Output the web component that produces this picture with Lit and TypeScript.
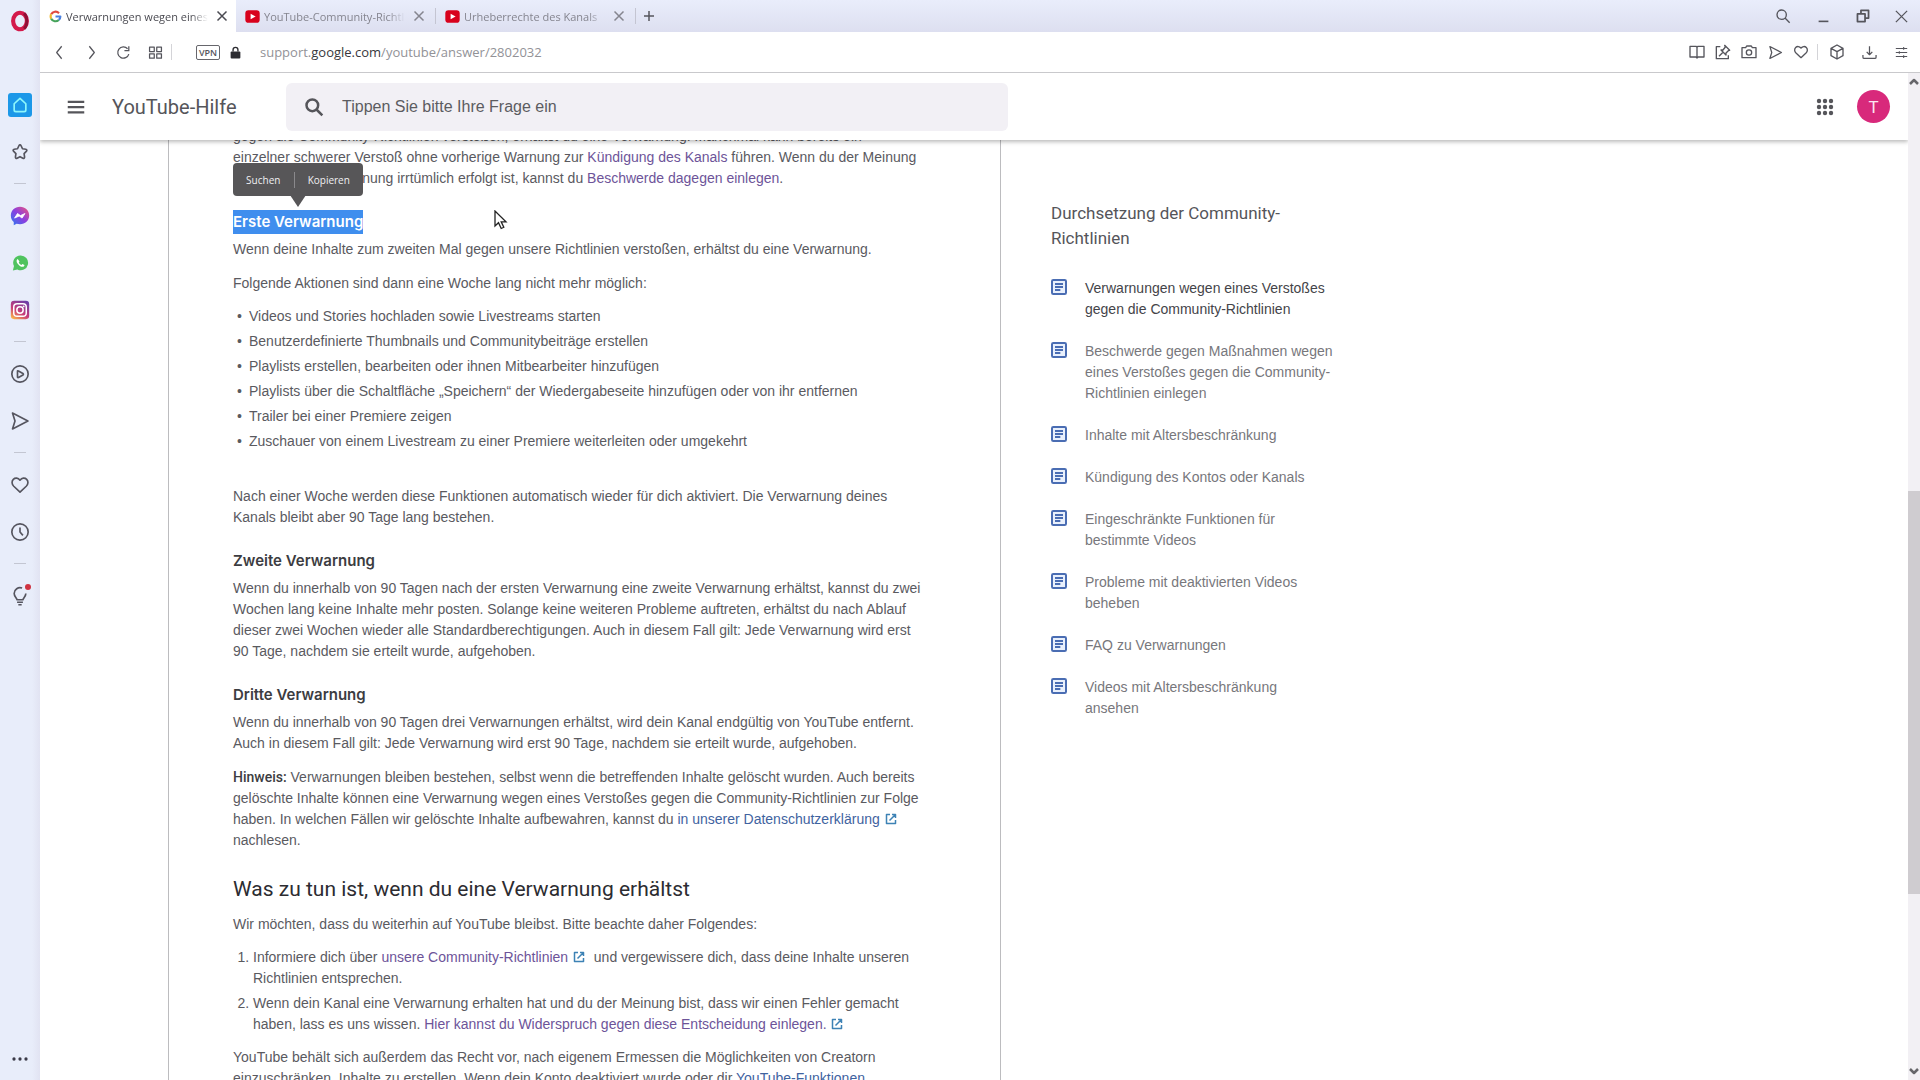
import { LitElement, html, css, svg, TemplateResult } from "lit";
import { customElement, property } from "lit/decorators.js";

const ICONS: Record<string, TemplateResult> = {
  opera: svg`<ellipse cx="12" cy="12" rx="7.500" ry="9" fill="none" stroke="#d3194a" stroke-width="4.500"/><path d="M16.500 3.500c4 4 4 13 0 17" fill="none" stroke="#8f0f35" stroke-width="3"/>`,
  home: svg`<path d="M5 10.500 12 4l7 6.500V18a2 2 0 0 1-2 2H7a2 2 0 0 1-2-2z"/>`,
  star: svg`<path d="M12 3.500c.6 0 1 .4 1.300 1l1.700 3.600 4 .6c1.200.2 1.600 1.500.8 2.300l-2.900 2.900.6 4.200c.1 1.200-1 1.900-2 1.400L12 17.600l-3.500 1.900c-1 .5-2.100-.2-2-1.400l.6-4.200L4.200 11c-.8-.8-.4-2.100.8-2.300l4-.6 1.700-3.600c.3-.6.700-1 1.300-1z"/>`,
  messenger: svg`<defs><linearGradient id="mg" x1="0" y1="1" x2="1" y2="0"><stop offset="0" stop-color="#2a7cf0"/><stop offset=".5" stop-color="#8a3fe0"/><stop offset="1" stop-color="#f0567a"/></linearGradient></defs><path d="M12 1C5.700 1 1 5.500 1 11.500c0 3.200 1.300 6 3.500 7.800V23l3.400-1.700c1.300.4 2.700.6 4.100.6 6.300 0 11-4.500 11-10.500S18.300 1 12 1z" fill="url(#mg)" stroke="none"/><path d="m5.500 14.500 3.500-5.500 3.500 2.500L18 9l-3.500 5.500-3.500-2.500z" fill="#fff" stroke="#fff" stroke-width="1"/>`,
  whatsapp: svg`<path d="M12.500 2A9.500 9.500 0 0 0 4 16l-1.500 6L8.500 20.500A9.800 9.800 0 1 0 12.500 2z" fill="#4fc35f" stroke="none"/><path d="M9 6.500c-2 1-2 3.500-.3 6.100 1.800 2.700 4.500 4.600 6.800 4.500 1.500 0 2.500-1.200 2.400-2.600l-2.700-1.300-1.300 1.400c-1.700-.6-3-2-3.600-3.400l1-1.300z" fill="#fff" stroke="none"/>`,
  instagram: svg`<defs><linearGradient id="ig" x1="0.200" y1="1" x2="0.800" y2="0"><stop offset="0" stop-color="#f9b04a"/><stop offset=".4" stop-color="#c93c78"/><stop offset="1" stop-color="#6a3fa8"/></linearGradient></defs><rect x="1" y="1" width="22" height="22" rx="4" fill="url(#ig)" stroke="none"/><rect x="4.500" y="4.500" width="15" height="15" rx="4" stroke="#fff" stroke-width="1.800"/><circle cx="12" cy="12" r="3.800" stroke="#fff" stroke-width="1.800"/><circle cx="16.400" cy="7.700" r="1.100" fill="#fff" stroke="none"/>`,
  play: svg`<circle cx="12" cy="12" r="9.800"/><path d="M9 8.500v7c0 .8.400 1 1.200.7l5.300-3c.8-.6.800-1.200 0-1.800l-5.300-3c-.8-.5-1.200-.3-1.200.1z"/>`,
  send: svg`<path d="M3 2.500 21.500 12 3 21.500 6 12z"/>`,
  heart: svg`<path d="M12 20.500 4.500 13.500C2 11 1.800 7.500 4 5.300s5.800-2 8 .9c2.200-2.900 5.800-3.100 8-.9s2 5.700-.5 8.200z"/>`,
  clock: svg`<circle cx="12" cy="12" r="9.800"/><path d="M12 6.500V12l3.500 4"/>`,
  bulb: svg`<path d="M19 9c0 3.500-3 5-3.500 7.500h-7C8 14 5 12.500 5 9a7 7 0 0 1 9.500-6.500M8.500 19.500h7M10 22.500h4"/>`,
  dots: svg`<g fill="#3b3b48" stroke="none"><circle cx="4" cy="12" r="2.200"/><circle cx="12" cy="12" r="2.200"/><circle cx="20" cy="12" r="2.200"/></g>`,
  google: svg`<g fill="none" stroke-width="4"><path d="M18.500 5.800A9 9 0 0 0 4 8" stroke="#e04a3f"/><path d="M4 8a9 9 0 0 0 0 8" stroke="#f1b92f"/><path d="M4 16a9 9 0 0 0 14 2.500" stroke="#45a35a"/><path d="M18 18.500A9 9 0 0 0 21 12h-9" stroke="#4a80e0"/></g>`,
  youtube: svg`<rect x="0.500" y="2" width="23" height="20" rx="5" fill="#d8021c" stroke="none"/><path d="m9 7.500 8 4.500-8 4.500z" fill="#fff" stroke="none"/>`,
  close: svg`<path d="m3 3 18 18M21 3 3 21"/>`,
  plus: svg`<path d="M12 2v20M2 12h20"/>`,
  search: svg`<circle cx="10" cy="10" r="7"/><path d="m15 15 7 7"/>`,
  minimize: svg`<path d="M3 21h18"/>`,
  restore: svg`<path d="M2.500 8.500h13v13h-13zM8.500 8V2.500h13v13H16"/>`,
  back: svg`<path d="m15.500 2-8 10 8 10"/>`,
  forward: svg`<path d="m8.500 2 8 10-8 10"/>`,
  reload: svg`<path d="M20.500 14.500A9 9 0 1 1 18.500 6M20.500 2v7h-7"/>`,
  speed: svg`<path d="M2.500 3.500h7.500v7H2.500zM14 3.500h7.500v7H14zM2.500 14h7.500v7H2.500zM14 14h7.500v7H14z"/>`,
  lock: svg`<rect x="3" y="10" width="18" height="13" rx="2" fill="#2c2c31" stroke="none"/><path d="M7.500 10V7a4.500 4.500 0 0 1 9 0v3" stroke="#2c2c31" stroke-width="2.500"/>`,
  book: svg`<path d="M12 5v15M12 5 10.500 3.500H1.500v16h9l1.500 1.500 1.500-1.500h9v-16h-9z"/>`,
  pin: svg`<path d="M8 4H2v18h18v-5M14.500 2l7.500 7.500-2 .5-3.500 3.500v3l-7.500-7.500h3L15.500 4.500zM12 12.500 6 18.500"/>`,
  camera: svg`<path d="M1.500 5.500H7L8.500 3h7L17 5.500h5.500v15h-21z"/><circle cx="12" cy="12.800" r="4"/>`,
  cube: svg`<path d="m12 1.500 9 5v11l-9 5-9-5v-11zM3 6.500l9 5 9-5M12 11.500v11"/>`,
  download: svg`<path d="M12 2v13M7.500 11l4.500 4.500 4.500-4.500M1.500 16v3.500a2 2 0 0 0 2 2h17a2 2 0 0 0 2-2V16"/>`,
  sliders: svg`<path d="M1.500 4.500h21M1.500 12h21M1.500 19.500h21M16 2v5M8 9.500v5M16 17v5"/>`,
  menu: svg`<path d="M1 5h22M1 12h22M1 19h22"/>`,
  apps: svg`<g fill="#55555a" stroke="none">${[4, 12, 20].map((y) => [4, 12, 20].map((x) => svg`<circle cx=${x} cy=${y} r="2.900"/>`))}</g>`,
  article: svg`<rect x="1.500" y="1.500" width="21" height="21" rx="2" fill="#e9f0fc"/><path d="M6 7.500h12M6 12h12M6 16.500h8"/>`,
  external: svg`<path d="M10 3H3v18h18v-7M14 3h7v7M21 3 9 15"/>`,
  up: svg`<path d="m4 16 8-8 8 8"/>`,
  down: svg`<path d="m4 8 8 8 8-8"/>`,
};

@customElement("ui-icon")
export class UiIcon extends LitElement {
  @property() name = "";
  @property({ type: Number }) size = 16;
  @property({ type: Number }) weight = 2;
  static styles = css`
    :host { display: inline-flex; flex: none; }
    .glyph { display: block; fill: none; stroke: currentColor; stroke-linejoin: round; }
  `;
  render() {
    return html`<svg class="glyph" aria-hidden="true" viewBox="0 0 24 24" width=${this.size} height=${this.size} stroke-width=${this.weight}>${ICONS[this.name]}</svg>`;
  }
}

@customElement("side-rail")
export class SideRail extends LitElement {
  static styles = css`
    :host { display: flex; flex-direction: column; align-items: center; width: 40px; background: linear-gradient(90deg, #e8edfa 80%, #e1e3f2); color: #55555f; }
    .item { position: relative; display: flex; flex: none; align-items: center; justify-content: center; width: 40px; height: 47px; padding: 0; border: 0; background: none; color: inherit; }
    .logo { height: 41px; margin-bottom: 40px; }
    .home { display: flex; align-items: center; justify-content: center; width: 24px; height: 24px; border-radius: 3px; background: #1c98e8; color: #8df6fb; }
    .rule { width: 12px; height: 1px; margin: 8px 0; background: #c3c6d2; }
    .badge { position: absolute; right: 9px; top: 12px; width: 6px; height: 6px; border-radius: 50%; background: #cf3341; }
    .more { margin-top: auto; height: 42px; }
  `;
  item(name: string, label: string, size = 18) {
    return html`<button class="item" aria-label=${label}><ui-icon name=${name} size=${size}></ui-icon>${name === "bulb" ? html`<span class="badge"></span>` : ""}</button>`;
  }
  render() {
    const rule = html`<span class="rule"></span>`;
    return html`
      <button class="item logo" aria-label="Opera"><ui-icon name="opera" size="22"></ui-icon></button>
      <button class="item" aria-label="Startseite"><span class="home"><ui-icon name="home" size="20"></ui-icon></span></button>
      ${this.item("star", "Lesezeichen", 20)} ${rule}
      ${this.item("messenger", "Messenger", 20)} ${this.item("whatsapp", "WhatsApp")} ${this.item("instagram", "Instagram", 20)} ${rule}
      ${this.item("play", "Player", 20)} ${this.item("send", "Mein Flow", 20)} ${rule}
      ${this.item("heart", "Favoriten", 20)} ${this.item("clock", "Verlauf", 20)} ${rule}
      ${this.item("bulb", "Tipps", 20)}
      <button class="item more" aria-label="Mehr"><ui-icon name="dots" size="18"></ui-icon></button>
    `;
  }
}

@customElement("browser-bar")
export class BrowserBar extends LitElement {
  static styles = css`
    :host { display: block; font-family: "Open Sans", "Noto Sans", sans-serif; color: #55555c; }
    button { padding: 0; border: 0; background: none; color: inherit; font: inherit; display: flex; align-items: center; justify-content: center; }
    .tabs { display: flex; height: 32px; background: linear-gradient(#e9edfb, #dddff0); font-size: 11px; }
    .tab { display: flex; align-items: center; width: 199px; box-sizing: border-box; padding: 0 8px 0 9px; color: #85858f; }
    .tab.active { width: 196px; background: #fff; color: #4b4b52; padding-right: 6px; }
    .select { flex: 1; min-width: 0; height: 32px; gap: 4px; justify-content: flex-start; }
    .title { flex: 1; text-align: left; white-space: nowrap; overflow: hidden; mask-image: linear-gradient(90deg, #000 88%, transparent); }
    .close { width: 16px; height: 32px; margin-left: 6px; }
    .divider { width: 1px; height: 16px; margin: 8px 0; background: #c4c5d2; }
    .new { width: 26px; }
    .window { margin-left: auto; display: flex; }
    .window button { width: 40px; }
    .window button:last-child { width: 37px; }
    .tools { display: flex; align-items: center; height: 41px; box-sizing: border-box; border-bottom: 1px solid #c9c9cc; background: #fff; padding: 0 3px; }
    .nav { width: 32px; height: 32px; }
    .line { width: 1px; height: 16px; background: #d4d4d8; }
    .vpn { height: 15px; width: 24px; margin: 0 9px 0 24px; border: 1px solid #66666c; border-radius: 2px; font-size: 9px; font-weight: 600; box-sizing: border-box; }
    .url { margin-left: 18px; font-size: 13px; color: #929297; }
    .host { color: #38383d; }
    .actions { margin-left: auto; display: flex; align-items: center; }
    .actions button { width: 26px; height: 32px; }
    .actions .wide { width: 32px; }
    .actions .line { margin: 0 3px; }
  `;
  tab(icon: string, title: string, active = false) {
    return html`<div class="tab ${active ? "active" : ""}">
      <button class="select"><ui-icon name=${icon} size=${active ? 13 : 15}></ui-icon><span class="title">${title}</span></button>
      <button class="close" aria-label="Tab schließen"><ui-icon name="close" size="12" weight="3"></ui-icon></button>
    </div>`;
  }
  render() {
    const b = (n: string, l: string, c: string, s = 16, w = 2) => html`<button class=${c} aria-label=${l}><ui-icon name=${n} size=${s} weight=${w}></ui-icon></button>`;
    return html`
      <div class="tabs">
        ${this.tab("google", "Verwarnungen wegen eines", true)}
        ${this.tab("youtube", "YouTube-Community-Richtl")}
        <span class="divider"></span>
        ${this.tab("youtube", "Urheberrechte des Kanals")}
        <span class="divider"></span>
        ${b("plus", "Neuer Tab", "new", 12, 3)}
        <div class="window">${b("search", "Tabs suchen", "", 16)}${b("minimize", "Minimieren", "", 13, 3)}${b("restore", "Verkleinern", "", 14, 3)}${b("close", "Schließen", "", 15, 2)}</div>
      </div>
      <div class="tools">
        ${b("back", "Zurück", "nav", 15, 2)}${b("forward", "Vorwärts", "nav", 15, 2)}${b("reload", "Neu laden", "nav", 15, 2)}${b("speed", "Schnellwahl", "nav", 15, 2)}
        <span class="line"></span>
        <button class="vpn">VPN</button><ui-icon name="lock" size="13"></ui-icon>
        <button class="url" aria-label="Adresse"><span>support.<span class="host">google.com</span>/youtube/answer/2802032</span></button>
        <div class="actions">
          ${b("book", "Leseansicht", "")}${b("pin", "Anheften", "")}${b("camera", "Schnappschuss", "")}${b("send", "Senden", "", 15)}${b("heart", "Favorit", "")}
          <span class="line"></span>
          ${b("cube", "Krypto", "wide")}${b("download", "Downloads", "wide", 15)}${b("sliders", "Einstellungen", "wide", 13)}
        </div>
      </div>
    `;
  }
}

@customElement("help-header")
export class HelpHeader extends LitElement {
  static styles = css`
    :host { display: flex; align-items: center; height: 67px; box-sizing: border-box; padding: 0 18px 0 20px; background: #fff; box-shadow: 0 2px 4px #0004; color: #55555a; position: relative; z-index: 2; font-family: Roboto, sans-serif; }
    button { display: flex; align-items: center; justify-content: center; padding: 0; border: 0; background: none; color: inherit; }
    .menu { width: 32px; height: 40px; }
    .brand { width: 174px; margin-left: 20px; color: #55555a; text-decoration: none; font-size: 20px; }
    .search { display: flex; align-items: center; gap: 18px; flex: 0 1 722px; height: 48px; box-sizing: border-box; padding: 0 18px; border-radius: 6px; background: #f2f0f5; }
    .field { flex: 1; border: 0; outline: 0; padding: 0; background: none; font: 16px "Liberation Sans", sans-serif; color: #55555a; }
    .field::placeholder { color: #5c5c61; opacity: 1; }
    .apps { margin-left: auto; width: 40px; height: 40px; }
    .avatar { margin-left: 12px; width: 33px; height: 33px; border-radius: 50%; background: #d8297b; color: #fbe6f1; font: 17px Roboto, sans-serif; }
  `;
  render() {
    return html`
      <button class="menu" aria-label="Hauptmenü"><ui-icon name="menu" size="18" weight="3"></ui-icon></button>
      <a class="brand" href="#">YouTube-Hilfe</a>
      <label class="search"><ui-icon name="search" size="20" weight="3"></ui-icon><input class="field" type="text" aria-label="Frage" placeholder="Tippen Sie bitte Ihre Frage ein" /></label>
      <button class="apps" aria-label="Google-Apps"><ui-icon name="apps" size="18"></ui-icon></button>
      <button class="avatar" aria-label="Google-Konto">T</button>
    `;
  }
}

@customElement("help-article")
export class HelpArticle extends LitElement {
  static styles = css`
    :host { display: block; box-sizing: border-box; margin-top: -14px; padding: 0 60px 0 64px; border: solid #bcbcbf; border-width: 0 1px; background: #fff; color: #5a5a5f; font: 14px/21px "Liberation Sans", sans-serif; white-space: nowrap; }
    p, h2, h3, ul, ol { margin: 0; }
    p + p { margin-top: 13px; }
    h3 { margin: 21px 0 5px; font: 600 15px/24px Inter, sans-serif; color: #3c3c41; }
    h2 { margin: 24px 0 11px; font: 400 21px/28px Roboto, sans-serif; color: #2c2c31; }
    ul, ol { display: flex; flex-direction: column; gap: 4px; margin: 12px 0; }
    ul { padding-left: 16px; margin-bottom: 34px; list-style: none; }
    ul li::before { content: "•"; display: inline-block; width: 12px; margin-left: -12px; }
    ol { padding-left: 20px; }
    a { color: #6d5499; text-decoration: none; }
    a.fresh { color: #3f639f; }
    b { font-family: Roboto, sans-serif; font-weight: 500; color: #3c3c41; }
    .ext { color: #3d82b5; margin: 0 1px; vertical-align: -1px; }
    .marked { position: relative; display: inline-block; background: #3f8eee; color: #fff; }
    .popup { position: absolute; left: 0; bottom: 38px; display: flex; align-items: center; width: 130px; height: 33px; border-radius: 4px; background: #575658; color: #fff; }
    .popup::after { content: ""; position: absolute; left: 57px; top: 32px; border: 8px solid transparent; border-top: 12px solid #575658; border-bottom: 0; }
    .popup button { flex: 1 1 auto; height: 33px; padding: 0; border: 0; background: none; color: #f0f0f2; font: 10px "Open Sans", sans-serif; }
    .split { width: 1px; height: 16px; background: #8a898c; }
  `;
  render() {
    const ext = html`<ui-icon class="ext" name="external" size="12" weight="3"></ui-icon>`;
    return html`
      <p>gegen die Community-Richtlinien verstoßen, erhältst du eine Verwarnung. Manchmal kann bereits ein<br />
      einzelner schwerer Verstoß ohne vorherige Warnung zur <a href="#">Kündigung des Kanals</a> führen. Wenn du der Meinung<br />
      bist, dass die Verwarnung irrtümlich erfolgt ist, kannst du <a href="#">Beschwerde dagegen einlegen</a>.</p>
      <h3><span class="marked">Erste Verwarnung<span class="popup"><button>Suchen</button><span class="split"></span><button>Kopieren</button></span></span></h3>
      <p>Wenn deine Inhalte zum zweiten Mal gegen unsere Richtlinien verstoßen, erhältst du eine Verwarnung.</p>
      <p>Folgende Aktionen sind dann eine Woche lang nicht mehr möglich:</p>
      <ul>
        <li>Videos und Stories hochladen sowie Livestreams starten</li>
        <li>Benutzerdefinierte Thumbnails und Communitybeiträge erstellen</li>
        <li>Playlists erstellen, bearbeiten oder ihnen Mitbearbeiter hinzufügen</li>
        <li>Playlists über die Schaltfläche „Speichern“ der Wiedergabeseite hinzufügen oder von ihr entfernen</li>
        <li>Trailer bei einer Premiere zeigen</li>
        <li>Zuschauer von einem Livestream zu einer Premiere weiterleiten oder umgekehrt</li>
      </ul>
      <p>Nach einer Woche werden diese Funktionen automatisch wieder für dich aktiviert. Die Verwarnung deines<br />
      Kanals bleibt aber 90 Tage lang bestehen.</p>
      <h3>Zweite Verwarnung</h3>
      <p>Wenn du innerhalb von 90 Tagen nach der ersten Verwarnung eine zweite Verwarnung erhältst, kannst du zwei<br />
      Wochen lang keine Inhalte mehr posten. Solange keine weiteren Probleme auftreten, erhältst du nach Ablauf<br />
      dieser zwei Wochen wieder alle Standardberechtigungen. Auch in diesem Fall gilt: Jede Verwarnung wird erst<br />
      90 Tage, nachdem sie erteilt wurde, aufgehoben.</p>
      <h3>Dritte Verwarnung</h3>
      <p>Wenn du innerhalb von 90 Tagen drei Verwarnungen erhältst, wird dein Kanal endgültig von YouTube entfernt.<br />
      Auch in diesem Fall gilt: Jede Verwarnung wird erst 90 Tage, nachdem sie erteilt wurde, aufgehoben.</p>
      <p><b>Hinweis:</b> Verwarnungen bleiben bestehen, selbst wenn die betreffenden Inhalte gelöscht wurden. Auch bereits<br />
      gelöschte Inhalte können eine Verwarnung wegen eines Verstoßes gegen die Community-Richtlinien zur Folge<br />
      haben. In welchen Fällen wir gelöschte Inhalte aufbewahren, kannst du <a class="fresh" href="#">in unserer Datenschutzerklärung ${ext}</a><br />
      nachlesen.</p>
      <h2>Was zu tun ist, wenn du eine Verwarnung erhältst</h2>
      <p>Wir möchten, dass du weiterhin auf YouTube bleibst. Bitte beachte daher Folgendes:</p>
      <ol>
        <li>Informiere dich über <a href="#">unsere Community-Richtlinien ${ext}</a>&nbsp; und vergewissere dich, dass deine Inhalte unseren<br />Richtlinien entsprechen.</li>
        <li>Wenn dein Kanal eine Verwarnung erhalten hat und du der Meinung bist, dass wir einen Fehler gemacht<br />haben, lass es uns wissen. <a href="#">Hier kannst du Widerspruch gegen diese Entscheidung einlegen. ${ext}</a></li>
      </ol>
      <p>YouTube behält sich außerdem das Recht vor, nach eigenem Ermessen die Möglichkeiten von Creatorn<br />
      einzuschränken, Inhalte zu erstellen. Wenn dein Konto deaktiviert wurde oder dir <a class="fresh" href="#">YouTube-Funktionen</a></p>
    `;
  }
}

@customElement("related-links")
export class RelatedLinks extends LitElement {
  static styles = css`
    :host { display: block; padding-top: 61px; font: 14px/21px "Liberation Sans", sans-serif; color: #77777c; white-space: nowrap; }
    .heading { margin: 0 0 27px; font: 400 17px/25px Roboto, sans-serif; color: #55555a; }
    .list { display: flex; flex-direction: column; gap: 21px; margin: 0; padding: 0; list-style: none; }
    .link { display: flex; gap: 18px; color: inherit; text-decoration: none; }
    .link.current { color: #444449; }
    .mark { color: #4a6db3; padding-top: 1px; }
  `;
  links = [
    ["Verwarnungen wegen eines Verstoßes", "gegen die Community-Richtlinien"],
    ["Beschwerde gegen Maßnahmen wegen", "eines Verstoßes gegen die Community-", "Richtlinien einlegen"],
    ["Inhalte mit Altersbeschränkung"],
    ["Kündigung des Kontos oder Kanals"],
    ["Eingeschränkte Funktionen für", "bestimmte Videos"],
    ["Probleme mit deaktivierten Videos", "beheben"],
    ["FAQ zu Verwarnungen"],
    ["Videos mit Altersbeschränkung", "ansehen"],
  ];
  render() {
    return html`
      <h2 class="heading">Durchsetzung der Community-<br />Richtlinien</h2>
      <ul class="list">
        ${this.links.map((lines, i) => html`<li><a class="link ${i === 0 ? "current" : ""}" href="#"><ui-icon class="mark" name="article" size="16" weight="3"></ui-icon><span>${lines.map((l, n) => (n ? html`<br />${l}` : l))}</span></a></li>`)}
      </ul>
    `;
  }
}

@customElement("app-root")
export class AppRoot extends LitElement {
  static styles = css`
    :host { display: flex; height: 100vh; overflow: hidden; background: #fff; }
    .window { flex: 1; min-width: 0; display: flex; flex-direction: column; }
    .view { flex: 1; min-height: 0; display: flex; }
    .page { position: relative; flex: 1; min-width: 0; overflow: hidden; }
    .columns { display: grid; grid-template-columns: minmax(0, 833px) 300px; column-gap: 50px; padding-left: 128px; }
    .scroll { display: flex; flex-direction: column; align-items: center; width: 12px; background: #f2f0f4; color: #66666a; padding: 3px 0; box-sizing: border-box; }
    .thumb { flex: 40 0 0; width: 12px; background: #cfccd0; }
    .before { flex: 40 0 0; }
    .after { flex: 17 0 0; }
    .cursor { position: absolute; left: 454px; top: 137px; }
  `;
  render() {
    return html`
      <side-rail></side-rail>
      <div class="window">
        <browser-bar></browser-bar>
        <div class="view">
          <main class="page">
            <help-header></help-header>
            <div class="columns"><help-article></help-article><related-links></related-links></div>
            <svg class="cursor" width="14" height="20" viewBox="0 0 14 20" aria-hidden="true"><path d="M1 1v15l3.500-3.300 2.700 5.800 2.600-1.200-2.600-5.500H12z" fill="#fff" stroke="#222" stroke-width="1.300"/></svg>
          </main>
          <div class="scroll"><ui-icon name="up" size="12" weight="5"></ui-icon><span class="before"></span><span class="thumb"></span><span class="after"></span><ui-icon name="down" size="12" weight="5"></ui-icon></div>
        </div>
      </div>
    `;
  }
}
